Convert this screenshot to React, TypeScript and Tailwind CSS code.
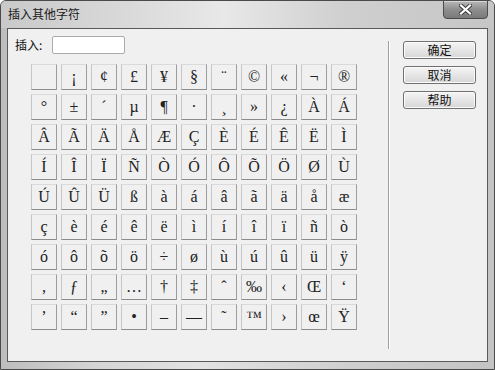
import React from "react";

const rows: string[][] = [
  ["", "¡", "¢", "£", "¥", "§", "¨", "©", "«", "¬", "®"],
  ["°", "±", "´", "µ", "¶", "·", "¸", "»", "¿", "À", "Á"],
  ["Â", "Ã", "Ä", "Å", "Æ", "Ç", "È", "É", "Ê", "Ë", "Ì"],
  ["Í", "Î", "Ï", "Ñ", "Ò", "Ó", "Ô", "Õ", "Ö", "Ø", "Ù"],
  ["Ú", "Û", "Ü", "ß", "à", "á", "â", "ã", "ä", "å", "æ"],
  ["ç", "è", "é", "ê", "ë", "ì", "í", "î", "ï", "ñ", "ò"],
  ["ó", "ô", "õ", "ö", "÷", "ø", "ù", "ú", "û", "ü", "ÿ"],
  ["‚", "ƒ", "„", "…", "†", "‡", "ˆ", "‰", "‹", "Œ", "‘"],
  ["’", "“", "”", "•", "–", "—", "˜", "™", "›", "œ", "Ÿ"],
];

const cjk = "font-['Noto_Sans_CJK_SC','Noto_Sans',sans-serif]";

function DialogButton({ label }: { label: string }) {
  return (
    <button
      className={`h-[18px] w-[73px] rounded-[3px] border border-[#707070] bg-[linear-gradient(#f4f4f4,#e6e6e6_50%,#d6d6d6)] text-[12px] leading-none text-[#111] shadow-[inset_0_0_0_1px_#fbfbfb] ${cjk}`}
    >
      {label}
    </button>
  );
}

export default function App() {
  return (
    <div className="w-[495px] h-[370px] flex flex-col overflow-hidden rounded-t-[6px] border border-[#4a4a4a] bg-[linear-gradient(90deg,#bdbdbd,#d6d6d6_20%,#e2e2e2_40%,#cfcfcf_70%,#c4c4c4)]">
      {/* Title bar */}
      <div className="h-[27px] flex items-start justify-between bg-[linear-gradient(90deg,#c9c9c9,#d9d9d9_25%,#e8e8e8_45%,#cfcfcf_70%,#c6c6c6)]">
        <span className={`ml-[7px] mt-[6px] text-[12px] leading-[14px] text-[#1a1a1a] ${cjk}`}>
          插入其他字符
        </span>
        <div className="mr-[6px] w-[45px] h-[19px] -mt-px flex items-center justify-center rounded-b-[4px] border border-[#4c4c4c] bg-[linear-gradient(#b8b8b8,#8e8e8e_50%,#7a7a7a)] shadow-[inset_0_1px_0_#d8d8d8]">
          <svg width="13" height="11" viewBox="0 0 13 11">
            <path d="M2 1.5 L11 9.5 M11 1.5 L2 9.5" stroke="#3a3a3a" strokeWidth="4" strokeLinecap="square" />
            <path d="M2 1.5 L11 9.5 M11 1.5 L2 9.5" stroke="#ffffff" strokeWidth="2.2" strokeLinecap="square" />
          </svg>
        </div>
      </div>

      {/* Client area */}
      <div className="flex-1 flex px-[6px] pb-[7px]">
        <div className="flex-1 flex border border-[#5a5a5a] bg-[#f0f0f0]">
          <div className="w-[380px] pl-[7px] pt-[7px]">
            <div className="flex items-center h-[18px]">
              <span className={`text-[12px] leading-none text-[#111] ${cjk}`}>插入:</span>
              <div className="ml-[10px] w-[73px] h-[18px] rounded-[2px] border border-[#ababab] bg-white" />
            </div>
            <div className="mt-[10px] ml-[16px] grid grid-cols-[repeat(11,26px)] auto-rows-[26px] gap-[4px]">
              {rows.flat().map((ch, i) => (
                <div
                  key={i}
                  className="flex items-center justify-center border border-t-[#dadada] border-l-[#c6c6c6] border-r-[#9c9c9c] border-b-[#8c8c8c] bg-[#f0f0f0] font-['Liberation_Serif','Times_New_Roman',serif] text-[16px] leading-none text-[#222]"
                >
                  {ch}
                </div>
              ))}
            </div>
          </div>
          <div className="mt-[12px] h-[308px] w-[2px] border-l border-l-[#a0a0a0] border-r border-r-white" />
          <div className="ml-[13px] mt-[12px] flex flex-col gap-[7px]">
            <DialogButton label="确定" />
            <DialogButton label="取消" />
            <DialogButton label="帮助" />
          </div>
        </div>
      </div>
    </div>
  );
}
